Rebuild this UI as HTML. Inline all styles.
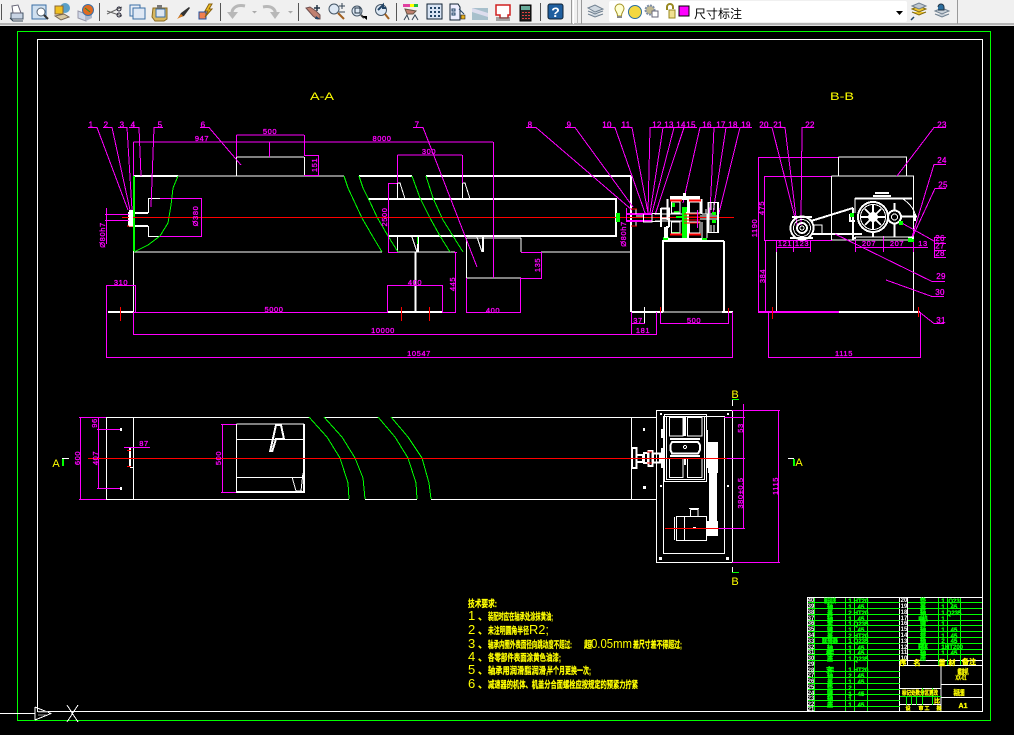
<!DOCTYPE html>
<html><head><meta charset="utf-8"><style>
html,body{margin:0;padding:0;background:#000;width:1014px;height:735px;overflow:hidden}
svg{display:block;position:absolute;left:0;top:0}
.c *{fill:none;shape-rendering:crispEdges}
.w{stroke:#fff}.m{stroke:#f0f}.g{stroke:#0f0}.r{stroke:#f00}.y{stroke:#ff0}
.t2{stroke-width:2}
.d text{fill:#f0f;stroke:#f0f;stroke-width:.3px;font:7.5px "Liberation Sans",sans-serif;letter-spacing:.6px;text-anchor:middle}
.l text{fill:#f0f;stroke:#f0f;stroke-width:.3px;font:8px "Liberation Sans",sans-serif;letter-spacing:.3px;text-anchor:middle}
.yt text{fill:#ff0;font:11px "Liberation Sans",sans-serif;text-anchor:middle}
.tr text{fill:#ff0;stroke:#ff0;stroke-width:.25px;font:bold 9.5px "Liberation Sans","Noto Sans CJK SC",sans-serif}
.tr text.n{stroke-width:0;font:13px "Liberation Sans","Noto Sans CJK SC",sans-serif}
.tb .gt{fill:#0f0;stroke:#0f0;stroke-width:.3px;font:bold 6px "Liberation Sans","Noto Sans CJK SC",sans-serif;text-anchor:middle}
.tb .wt{fill:#fff;font:bold 6px "Liberation Sans",sans-serif;text-anchor:middle}
.tb .yy{fill:#ff0;stroke:#ff0;stroke-width:.3px;font:bold 7px "Liberation Sans","Noto Sans CJK SC",sans-serif;text-anchor:middle}
</style></head><body>
<svg width="1014" height="735" viewBox="0 0 1014 735" xmlns="http://www.w3.org/2000/svg">
<rect width="1014" height="735" fill="#000"/>

<!-- frames -->
<g class="c">
<rect class="g" x="17.5" y="31.5" width="973" height="689"/>
<rect class="w" x="37.5" y="39.5" width="945" height="672"/>
<path class="w" d="M0 713.5H35"/>
<path class="w" d="M35 707V720M35 707L51 713.5L35 720M51 711.5H120"/>
<path class="w" d="M67 705L78 722M78 705L67 722"/>
<path stroke="#999" d="M38 712H48M38 715H46"/>
</g>

<!-- AA view -->
<g class="c">
<path class="w t2" d="M134 176H178M359 176H412M426 176H631M631 176V312M368 199H617M389 236H617M616 199V237"/>
<path class="w" d="M178 176H344M133.5 176V312M133 252H382M398 252H455M541 252H631"/>
<path class="w t2" d="M415.5 252V312M108 312H133M388 312H442M632 312H663M663 240V312M663 241H724M724 241V312M722 312H733"/>
<path class="w" d="M663 312H724M236.5 157H304M236.5 157V176M304.5 157V176M466.5 238H521M466.5 238V278M521 238V252M466.5 278H521M644.5 307V323"/>
<path class="w t2" d="M134 176V198M129 213H148M129 226H148M129 212V226"/>
<path class="w" d="M148.5 198V213M148.5 226V237M148 198.5H160M148 236.5H160"/>
<path class="w" d="M397.5 183V199M397 183H400L405 199M462.5 183V199M462 183H465L470 199M412 237L417 252M477 237L482 252M397.5 236V252"/>
<path class="w t2" d="M418 236V252M483 236V252"/>
<path class="g t2" d="M134 176V251"/>
<path class="g" d="M178 176L173 188L171 205L168 223L160 236L148 245L134 252M344 176L348 188L355 203L362 218L373 237L382 252M359 176L363 188L370 202L377 217L388 236L398 252M412 176L420 198L430 218L440 236L450 252M426 176L433 198L443 220L453 236L463 252M417.5 237V244"/>
<path class="r" d="M122 217.5H734M120.5 307V321M401.5 307V321M429.5 307V321M660.5 307V319M728.5 308V316M772.5 307V319M918.5 307V317M127 226H133"/>
<!-- dims AA -->
<path class="m" d="M133.5 142H493M493.5 142V278M133.5 142V176M236.5 135H304M236.5 135V157M304.5 135V156M269.5 142V157M304 155.5H318M304 175.5H318M318.5 155V176M397.5 155H462M397.5 155V183M462.5 155V183M388 183.5H397M388.5 183V252M388 252.5H398"/>
<path class="m" d="M160 198.5H201.5V236.5H160M105 214.5H129M105 220.5H129M106.5 208V244M106.5 285V358M106 285.5H135M135.5 285V312M134 312.5H388M134 334.5H657M106 357.5H733M732.5 312V358M133.5 312V335"/>
<path class="m" d="M387.5 285V312M442.5 285V312M387 285.5H442M454 252.5H457M442 312.5H456M455.5 252V312M466.5 278V312M520.5 278V312M466 312.5H521M521 252.5H542M521 278.5H542M541.5 252V278M631.5 312V335M631 323.5H645M656.5 312V335M660.5 312V323M728.5 312V323M660 323.5H729"/>
<!-- leaders AA -->
<path class="m" d="M88 127.5H97L128 210M103 127.5H112L130 210M118 127.5H127L132 210M129 127.5H139L141 176M163 127.5H154L151 207M200 127.5H209L241 165M413 127.5H423L477 267M526 127.5H536L632 210M565 127.5H575L633 207M603 127.5H615L645 213M621 127.5H632L648 213M665 127.5H650L648 213M675 127.5H663L650 213M687 127.5H674L652 213M697 127.5H684L655 215M714 127.5H700L683 203M727 127.5H714L710 213M739 127.5H726L713 213M752 127.5H740L718 217"/>
<!-- input shaft -->
<path class="m t2" d="M626 214H652M626 221H652"/>
<path class="m" d="M626.5 208V222"/>
<path class="w" d="M631 209H636V214M631 226H636V222M643.5 214V222H652V214M652 213.5H661M652 221.5H661M636 216H643"/>
<rect x="616" y="213" width="4" height="9" fill="#0f0" stroke="none" style="fill:#0f0"/>
<path class="r" d="M631 209H637M631 226H637"/>
</g>
<!-- Gearbox filled -->
<g shape-rendering="crispEdges">
<rect x="670" y="196" width="30" height="4" fill="#fff"/>
<rect x="683" y="193" width="3" height="4" fill="#fff"/>
<rect x="682" y="207" width="6" height="31" fill="#0f0"/>
<rect x="663" y="237" width="6" height="3" fill="#0f0"/>
<rect x="701" y="238" width="6" height="2" fill="#0f0"/>
<rect x="665" y="234" width="3" height="6" fill="#0f0"/>
<rect x="664" y="227" width="2" height="11" fill="#fff"/>
<rect x="668" y="238" width="34" height="2" fill="#fff"/>
<rect x="674" y="211" width="5" height="2" fill="#0f0"/>
<rect x="672" y="232" width="7" height="2" fill="#0f0"/>
<rect x="672" y="203" width="3" height="4" fill="#0f0"/>
<rect x="712" y="212" width="4" height="3" fill="#0f0"/>
<rect x="712" y="220" width="4" height="3" fill="#0f0"/>
<rect x="676" y="216" width="8" height="2" fill="#0f0"/>
<rect x="686" y="212" width="2" height="2" fill="#fff"/>
</g>
<g class="c">
<path class="w t2" d="M667.5 199V220M701.5 199V214M661 208.5H669V217M661 218.5H669V227M661 208V227M669 227H667V238"/>
<path class="w" d="M671.5 202H680V213H671.5ZM671.5 222H680V233H671.5ZM689.5 202H700V213H689.5ZM689.5 222H700V233H689.5ZM655 214H682M655 221H682M702 214H707V238M702 238V222M706 209V214H712"/>
<path class="w t2" d="M688 200V240M708.5 202V233M718 202V233"/>
<path class="w" d="M711 202V210M714 202V210M711 225V233M714 225V233M708 232.5H718M708 202.5H718M700 216H718M700 219H718"/>
<path class="r t2" d="M670 200.5H682M689 200.5H701M670 234.5H682M689 234.5H701"/>
<path class="r" d="M684 214H700M684 217H700M684 220H700M684 223H700"/>
<path class="m" d="M697.5 210V228"/>
</g>

<!-- BB view -->
<g class="c">
<path class="w" d="M838.5 157H907M838.5 157V176M906.5 157V176M831.5 176H914M831.5 176V240M913.5 176V312M831.5 240H914M776.5 240V312"/>
<path class="w t2" d="M839 312H920M853 234H812"/>
<path class="m t2" d="M758 312H839"/>
<path class="m" d="M758 157.5H838M758.5 157V312M764.5 176V240M764 176.5H831M764 240.5H832M765.5 240V312M768.5 312V358M920.5 312V358M768 357.5H921M776 247.5H811M855 247.5H928M776.5 240V252M793.5 240V252M810.5 240V252M855.5 240V252M883.5 236V252M913.5 240V252"/>
<path class="m" d="M760 127.5H772L795 218M775 127.5H785L797 225M814 127.5H802L801 225M946 127.5H934L897 176M946 164.5H934L912 237M946 188.5H935L912 238M934 241L900 222M934 237.5H946M934 243.5H946M934 250.5H946M934 257.5H946M934.5 237V258M945 281.5H932L835 234M944 296.5H932L886 280M944 323.5H934L918 311"/>
<path class="r" d="M772.5 307V319M918.5 307V317"/>
<path class="w t2" d="M811 221L853 208"/>
<circle class="w t2" cx="802" cy="228" r="11.5"/><circle class="w" cx="802" cy="228" r="8.5"/><circle class="w t2" cx="802" cy="228" r="5"/><circle class="w" cx="802" cy="228" r="2"/>
<path class="w t2" d="M790 238H813M792 217H812"/>
<path class="w" d="M814 225H822V234H814"/>
<path class="w t2" d="M855 198.5H912M853 208V240"/>
<path class="w" d="M855 198V213M855 237H912V240M903 199Q913 206 915 214"/>
<circle class="w t2" cx="873" cy="217" r="15"/><circle class="w" cx="873" cy="217" r="12.5"/><circle class="w t2" cx="873" cy="217" r="4"/>
<path class="w t2" d="M861 217H885M873 205V229M865 209L881 225M881 209L865 225"/>
<circle class="w t2" cx="894.5" cy="217" r="6.5"/><circle class="w" cx="894.5" cy="217" r="3"/>
<path class="w t2" d="M894.5 203V210M894.5 224V237M873 232V237M901 216.5H917M875 193H889M873 196H891"/>
<path class="w t2" d="M850 214V221H855M915 214V221"/>
<path class="w t2" d="M853 234H862M853 238H856M908 238H914"/>
<rect class="g t2" x="851" y="214" width="2" height="2"/><rect class="g t2" x="900" y="222" width="2" height="2"/><rect class="g t2" x="909" y="239" width="2" height="2"/><rect class="g t2" x="912" y="240" width="1" height="1"/>
</g>

<!-- Plan view -->
<g class="c">
<path class="w" d="M106 417.5H309M324 417.5H378M391 417.5H632M106 499.5H349M365 499.5H417M431 499.5H632M106.5 417V500M133.5 417V500M631.5 417V500M130 447.5H133M130 467.5H133M236.5 424H304M236.5 424V492M236.5 439.5H304M236.5 477.5H304"/>
<path class="w t2" d="M130 448V467M304 424V493M236 492H305"/>
<path class="w t2" d="M270 452L276 425H281L284 439M272 452L276 439H284"/>
<path class="w" d="M292 477L296 491H302M303 473L301 491"/>
<path class="g" d="M309 417L327 437L340 458L348 483L349 499M324 417L342 437L355 458L363 478L365 499M378 417L395 437L408 458L416 483L417 499M391 417L408 437L422 458L429 483L431 499"/>
<path class="m" d="M80.5 417V499M79 417.5H106M79 499.5H106M98.5 418V488M97 429.5H121M97 488.5H121M124 447.5H150M222.5 424V492M221 424.5H236M221 492.5H236"/>
<path class="r" d="M127 450.5H131M127 466.5H131"/>
<path class="w" d="M62 458.5H69M788 458.5H794"/>
<path class="g t2" d="M63 459V466M794 459V466"/>
<!-- plate -->
<path class="w" d="M631 417.5H656M631 499.5H656M656.5 410.5H732.5V562.5H656.5ZM663.5 416.5H724.5V553.5H663.5Z"/>
<path class="w" d="M732.5 400V406M732.5 567V572"/>
<path class="g" d="M732 399.5H739M732 572.5H739"/>
<path class="m" d="M732 410.5H780M732 562.5H780M778.5 410V563M724 417.5H745M743.5 404V528M726 458.5H745M719 528.5H745"/>
<path class="w t2" d="M632 448V468H636.500V448ZM636 455H643V462H636M644 453H648V463H644ZM648.500 451H652.500V466H648.500ZM653 453.500H660V462.500H653Z"/>
<path class="r" d="M647 452H652M647 463H652"/>
<path class="w" d="M664.500 414.500H706.500V481.500H664.500ZM666.500 416.500H704.500V479.500H666.500Z"/>
<path class="w" d="M669.500 417.500H683V436H669.500ZM687.500 417.500H702V436H687.500ZM669.500 458.500H683V477.500H669.500ZM687.500 458.500H702V477.500H687.500Z"/>
<path class="w t2" d="M672 442H698L700 445V450L698 453.500H672L670.500 450V445Z"/>
<path class="w t2" d="M662 429V438M662 448V468M707 430V468M684 417V436M685 417V436M685 458V465M670 439H700M670 456H700"/>
<circle class="w" cx="685" cy="447" r="1.500"/>
<path class="w" d="M676.500 516.500H706.500V540.500H676.500ZM674.500 517V540M684.500 516V541M690.500 509.500H698V517M690.500 509.500V517M689 508.500H699"/>
</g>
<g shape-rendering="crispEdges" fill="#fff">
<rect x="708" y="442" width="10" height="31"/><rect x="709" y="473" width="8" height="49"/><rect x="706" y="521" width="12" height="15"/>
<rect x="660" y="413" width="2" height="2"/><rect x="727" y="413" width="2" height="2"/><rect x="660" y="485" width="2" height="2"/><rect x="727" y="485" width="2" height="2"/><rect x="659" y="557" width="3" height="3"/><rect x="726" y="557" width="3" height="3"/>
<rect x="643" y="428" width="2" height="3"/><rect x="643" y="486" width="3" height="3"/><rect x="693" y="527" width="3" height="2"/>
<rect x="120" y="428" width="2" height="3"/><rect x="120" y="487" width="2" height="3"/>
<rect x="129" y="210" width="4" height="16"/>
</g>
<g class="c"><path class="r" d="M88 458.500H727M665 528.500H719"/><path class="r" d="M708 458.500H718" style="stroke:#f00"/></g>

<!-- Text: labels -->
<g class="l">
<text x="91" y="127.500">1</text><text x="106" y="127.500">2</text><text x="122" y="127.500">3</text><text x="133" y="127.500">4</text><text x="160" y="127.500">5</text><text x="203" y="127.500">6</text><text x="417" y="127.500">7</text><text x="530" y="127.500">8</text><text x="569" y="127.500">9</text><text x="607" y="127.500">10</text><text x="626" y="127.500">11</text><text x="657" y="127.500">12</text><text x="669" y="127.500">13</text><text x="681" y="127.500">14</text><text x="691" y="127.500">15</text><text x="707" y="127.500">16</text><text x="721" y="127.500">17</text><text x="733" y="127.500">18</text><text x="746" y="127.500">19</text>
<text x="764" y="127.500">20</text><text x="778" y="127.500">21</text><text x="810" y="127.500">22</text><text x="942" y="127.500">23</text><text x="942" y="163">24</text><text x="943" y="187.500">25</text><text x="940" y="241">26</text><text x="940" y="248.500">27</text><text x="940" y="256">28</text><text x="941" y="279">29</text><text x="940" y="295">30</text><text x="941" y="323">31</text>
</g>
<g class="d">
<text x="270" y="134">500</text><text x="202" y="141">947</text><text x="382" y="141">8000</text><text x="429" y="154">300</text>
<text x="121" y="285">310</text><text x="415" y="285">400</text><text x="493" y="313">400</text><text x="274" y="312">5000</text><text x="383" y="333">10000</text><text x="419" y="356">10547</text><text x="638" y="323">37</text><text x="643" y="333">181</text><text x="694" y="323">500</text>
<text transform="translate(317,165) rotate(-90)">151</text><text transform="translate(198,216) rotate(-90)">Ø380</text><text transform="translate(105,235) rotate(-90)">Ø80h7</text><text transform="translate(387,217) rotate(-90)">2500</text><text transform="translate(455,284) rotate(-90)">445</text><text transform="translate(540,265) rotate(-90)">135</text><text transform="translate(626,234) rotate(-90)">Ø80h7</text>
<text transform="translate(757,228) rotate(-90)">1190</text><text transform="translate(764,208) rotate(-90)">475</text><text transform="translate(765,276) rotate(-90)">384</text>
<text x="785" y="246">121</text><text x="802" y="246">123</text><text x="869" y="246">207</text><text x="897" y="246">207</text><text x="923" y="246">13</text><text x="844" y="356">1115</text>
<text transform="translate(80,458) rotate(-90)">600</text><text transform="translate(97,423) rotate(-90)">96</text><text transform="translate(98,458) rotate(-90)">407</text><text x="144" y="446">87</text><text transform="translate(221,458) rotate(-90)">500</text>
<text transform="translate(743,428) rotate(-90)">53</text><text transform="translate(743,493) rotate(-90)">380±0.5</text><text transform="translate(778,486) rotate(-90)">1115</text>
</g>
<g class="yt">
<text x="322" y="100" textLength="24" lengthAdjust="spacingAndGlyphs">A-A</text><text x="842" y="100" textLength="24" lengthAdjust="spacingAndGlyphs">B-B</text>
<text x="56" y="467">A</text><text x="799" y="466">A</text><text x="735" y="398">B</text><text x="735" y="585">B</text>
</g>

<!-- Tech requirements -->
<g class="tr">
<text x="468" y="607" textLength="29" lengthAdjust="spacingAndGlyphs">技术要求:</text>
<text class="n" x="468" y="620">1</text><text x="478" y="620">、</text><text x="488" y="620" textLength="65" lengthAdjust="spacingAndGlyphs">装配时应在轴承处涂抹黄油;</text>
<text class="n" x="468" y="634">2</text><text x="478" y="634">、</text><text x="488" y="634" textLength="41" lengthAdjust="spacingAndGlyphs">未注明圆角半径</text><text class="n" x="529" y="634" textLength="20" lengthAdjust="spacingAndGlyphs">R2;</text>
<text class="n" x="468" y="648">3</text><text x="478" y="648">、</text><text x="488" y="648" textLength="84" lengthAdjust="spacingAndGlyphs">轴承内圈外表面径向跳动度不超过:</text><text x="584" y="648" textLength="8" lengthAdjust="spacingAndGlyphs">超</text><text class="n" x="591" y="648" textLength="41" lengthAdjust="spacingAndGlyphs">0.05mm</text><text x="633" y="648" textLength="49" lengthAdjust="spacingAndGlyphs">差尺寸差不得超过;</text>
<text class="n" x="468" y="661">4</text><text x="478" y="661">、</text><text x="488" y="661" textLength="73" lengthAdjust="spacingAndGlyphs">各零部件表面涂黄色油漆;</text>
<text class="n" x="468" y="674">5</text><text x="478" y="674">、</text><text x="488" y="674" textLength="60" lengthAdjust="spacingAndGlyphs">轴承用润滑脂润滑,</text><text x="547" y="674" textLength="44" lengthAdjust="spacingAndGlyphs">半个月更换一次;</text>
<text class="n" x="468" y="688">6</text><text x="478" y="688">、</text><text x="488" y="688" textLength="150" lengthAdjust="spacingAndGlyphs">减速器的机体、机盖分合面螺栓应按规定的预紧力拧紧</text>
</g>

<!-- Title block -->
<g class="c">
<path class="w" d="M807.500 597.500H982M807.500 597V711M899.500 597V711M907.500 597V666M899 660.500H982M899 665.500H982M941 666V711M941 684.500H982M941 697.500H982M900 688.500H941M900 704.500H941"/>
<path class="g" d="M814.500 598V711M845.500 598V711M854.500 598V711M867.500 598V711M938.500 598V665M947.500 598V665M960.500 598V665M922.500 688V705M932.500 688V705M906.500 697V705M911.500 697V705M916.500 697V705M900 696.500H941"/>
<path class="g" d="M808 602.500H900M808 608.500H900M808 614.500H900M808 620.500H900M808 625.500H900M808 631.500H900M808 637.500H900M808 643.500H900M808 649.500H900M808 654.500H900M808 660.500H900M808 671.500H900M808 677.500H900M808 683.500H900M808 689.500H900M808 694.500H900M808 700.500H900M808 706.500H900M908 602.500H982M908 608.500H982M908 614.500H982M908 620.500H982M908 625.500H982M908 631.500H982M908 637.500H982M908 643.500H982M908 649.500H982M908 654.500H982"/>
</g>
<g class="tb">
<text class="wt" x="811" y="602">40</text><text class="wt" x="811" y="608">39</text><text class="wt" x="811" y="614">38</text><text class="wt" x="811" y="620">37</text><text class="wt" x="811" y="625">36</text><text class="wt" x="811" y="631">35</text><text class="wt" x="811" y="637">34</text><text class="wt" x="811" y="643">33</text><text class="wt" x="811" y="649">32</text><text class="wt" x="811" y="654">31</text><text class="wt" x="811" y="660">30</text><text class="wt" x="811" y="666">29</text><text class="wt" x="811" y="672">28</text><text class="wt" x="811" y="677">27</text><text class="wt" x="811" y="683">26</text><text class="wt" x="811" y="689">25</text><text class="wt" x="811" y="695">24</text><text class="wt" x="811" y="700">23</text><text class="wt" x="811" y="706">22</text><text class="wt" x="811" y="711">21</text>
<text class="wt" x="904" y="602">20</text><text class="wt" x="904" y="608">19</text><text class="wt" x="904" y="614">18</text><text class="wt" x="904" y="620">17</text><text class="wt" x="904" y="625">16</text><text class="wt" x="904" y="631">15</text><text class="wt" x="904" y="637">14</text><text class="wt" x="904" y="643">13</text><text class="wt" x="904" y="649">12</text><text class="wt" x="904" y="654">11</text><text class="wt" x="904" y="660">10</text>
<text class="gt" x="830" y="603" textLength="12" lengthAdjust="spacingAndGlyphs">输送机壳</text><text class="gt" x="830" y="609">轴</text><text class="gt" x="830" y="615">盖</text><text class="gt" x="830" y="621">轴</text><text class="gt" x="830" y="626">套</text><text class="gt" x="830" y="632">键</text><text class="gt" x="830" y="638">盖</text><text class="gt" x="830" y="643" textLength="16" lengthAdjust="spacingAndGlyphs">联轴器</text><text class="gt" x="830" y="650">轴</text><text class="gt" x="830" y="655" textLength="8">机架</text><text class="gt" x="830" y="661">座</text><text class="gt" x="830" y="672" textLength="8">支架</text><text class="gt" x="830" y="678">轴</text><text class="gt" x="830" y="684">盖</text><text class="gt" x="830" y="690">垫</text><text class="gt" x="830" y="696">键</text><text class="gt" x="830" y="701">轴</text><text class="gt" x="830" y="707">座</text>
<text class="gt" x="850" y="603">1</text><text class="gt" x="850" y="609">1</text><text class="gt" x="850" y="615">2</text><text class="gt" x="850" y="621">1</text><text class="gt" x="850" y="626">1</text><text class="gt" x="850" y="632">1</text><text class="gt" x="850" y="638">2</text><text class="gt" x="850" y="643">1</text><text class="gt" x="850" y="650">1</text><text class="gt" x="850" y="655">1</text><text class="gt" x="850" y="661">1</text><text class="gt" x="850" y="672">1</text><text class="gt" x="850" y="678">2</text><text class="gt" x="850" y="684">1</text><text class="gt" x="850" y="690">2</text><text class="gt" x="850" y="696">1</text><text class="gt" x="850" y="701">1</text><text class="gt" x="850" y="707">1</text>
<text class="gt" x="861" y="603">HT20</text><text class="gt" x="861" y="609">45</text><text class="gt" x="861" y="615">HT20</text><text class="gt" x="861" y="621">45</text><text class="gt" x="861" y="626">Q235</text><text class="gt" x="861" y="632">45</text><text class="gt" x="861" y="638">HT20</text><text class="gt" x="861" y="643">Q235</text><text class="gt" x="861" y="650">45</text><text class="gt" x="861" y="655">45</text><text class="gt" x="861" y="661">Q235</text><text class="gt" x="861" y="672">HT20</text><text class="gt" x="861" y="678">45</text><text class="gt" x="861" y="684">45</text><text class="gt" x="861" y="696">45</text><text class="gt" x="861" y="707">45</text>
<text class="gt" x="923" y="603">垫</text><text class="gt" x="923" y="609">盖</text><text class="gt" x="923" y="615">轴</text><text class="gt" x="923" y="621" textLength="10">电机</text><text class="gt" x="923" y="626">键</text><text class="gt" x="923" y="632">轴</text><text class="gt" x="923" y="638">带</text><text class="gt" x="923" y="643">轴</text><text class="gt" x="923" y="649" textLength="10">箱体</text><text class="gt" x="923" y="655">轴</text><text class="gt" x="923" y="660">座</text>
<text class="gt" x="943" y="603">1</text><text class="gt" x="943" y="609">1</text><text class="gt" x="943" y="615">1</text><text class="gt" x="943" y="621">1</text><text class="gt" x="943" y="626">1</text><text class="gt" x="943" y="632">1</text><text class="gt" x="943" y="638">1</text><text class="gt" x="943" y="643">2</text><text class="gt" x="943" y="649">1</text><text class="gt" x="943" y="655">1</text>
<text class="gt" x="954" y="603">Q23</text><text class="gt" x="954" y="609">45</text><text class="gt" x="954" y="615">Q235</text><text class="gt" x="954" y="632">45</text><text class="gt" x="954" y="638">45</text><text class="gt" x="954" y="643">45</text><text class="gt" x="954" y="649">HT200</text><text class="gt" x="954" y="655">45</text>
<text class="yy" x="903" y="665">序</text><text class="yy" x="917" y="665">名</text><text class="yy" x="942" y="665">量</text><text class="yy" x="952" y="665">材</text><text class="yy" x="969" y="664">备注</text>
<text class="yy" x="963" y="674" textLength="11" lengthAdjust="spacingAndGlyphs">螺旋机</text><text class="yy" x="961" y="680" textLength="11" lengthAdjust="spacingAndGlyphs">XX-01</text><text class="yy" x="959" y="695" textLength="11" lengthAdjust="spacingAndGlyphs">装配图</text><text class="yy" x="963" y="708">A1</text>
<text class="yy" x="920" y="695" textLength="36" lengthAdjust="spacingAndGlyphs" style="font-size:6px">标记处数分区更改</text><text class="yy" x="937" y="703" style="font-size:6px">比</text>
<text class="yy" x="908" y="710" style="font-size:5px">设</text><text class="yy" x="921" y="710" style="font-size:5px">审</text><text class="yy" x="927" y="710" style="font-size:5px">工</text><text class="yy" x="939" y="710" style="font-size:5px">批</text>
</g>

<!-- Toolbar -->
<rect x="0" y="0" width="1014" height="23" fill="#f0f0f0"/>
<rect x="0" y="23" width="1014" height="2" fill="#b4b4b4"/>
<rect x="0" y="25" width="1014" height="1" fill="#e0e0e0"/>
<g shape-rendering="crispEdges" fill="#555">
<rect x="1" y="4" width="1" height="16"/><rect x="99" y="3" width="1" height="18"/><rect x="220" y="3" width="1" height="18"/><rect x="298" y="3" width="1" height="18"/><rect x="396" y="3" width="1" height="18"/><rect x="540" y="3" width="1" height="18"/>
</g>
<rect x="571" y="0" width="1" height="24" fill="#999"/><rect x="573" y="0" width="1" height="24" fill="#fff"/><rect x="577" y="0" width="1" height="24" fill="#bbb"/><rect x="581" y="0" width="1" height="24" fill="#999"/>
<rect x="957" y="0" width="1" height="24" fill="#999"/>
<rect x="609" y="1" width="298" height="21" rx="2" fill="#fff"/>
<text x="694" y="18" font-family="'Liberation Sans','Noto Sans CJK SC',sans-serif" font-size="12" fill="#000">尺寸标注</text>
<rect x="679" y="6" width="10" height="10" fill="#f0f" stroke="#000" stroke-width="1" shape-rendering="crispEdges"/>
<path d="M896 11h7l-3.500 4z" fill="#000"/>

<!-- icons -->
<g fill="none">
<!-- print -->
<path d="M11 13h12v6H11z" fill="#c8d4e4" stroke="#456"/><path d="M12 6l6-1 3 8h-8z" fill="#fff" stroke="#667"/><path d="M10 18l3 3h10" stroke="#345"/>
<!-- preview -->
<path d="M32 5h14v14H32z" fill="#cfe0f0" stroke="#3a6ea5"/><circle cx="41" cy="12" r="4" fill="#fff" stroke="#567"/><path d="M44 15l4 4" stroke="#333" stroke-width="2"/>
<!-- publish -->
<circle cx="65" cy="8" r="5" fill="#5aa0c8"/><rect x="55" y="6" width="8" height="8" fill="#f0c020" stroke="#863"/><path d="M55 16l6 4 8-3-5-3z" fill="#d8c8a0" stroke="#765"/>
<!-- web -->
<path d="M78 11l8 3v7l-8-3z" fill="#d0d8e8" stroke="#99a"/><path d="M86 14l6-3v7l-6 3z" fill="#aeb8cc"/><circle cx="88" cy="10" r="5.500" fill="#e06a20" stroke="#3a70a8"/><path d="M85 8l5 4" stroke="#2c8a30"/>
<!-- cut -->
<path d="M107 11l15 5M107 14l15-7" stroke="#666"/><circle cx="119" cy="9" r="2" stroke="#223"/><circle cx="119" cy="15" r="2" stroke="#223"/>
<!-- copy -->
<rect x="130" y="5" width="10" height="11" fill="#e8eef6" stroke="#3a6ea5"/><rect x="133" y="8" width="12" height="11" fill="#dfe8f4" stroke="#3a6ea5"/>
<!-- paste -->
<path d="M153 8h14v11l-3 2h-9l-3-4z" fill="#d8b860" stroke="#8a6a20"/><rect x="156" y="9" width="9" height="8" fill="#dce6f2" stroke="#3a6ea5"/><rect x="157" y="5" width="5" height="3" fill="#777"/>
<!-- brush -->
<path d="M178 18l3-5 8-6 1 1-6 8z" fill="#333"/><path d="M177 19l4-5 2 2z" fill="#e08020"/>
<!-- match -->
<rect x="199" y="12" width="7" height="7" fill="#f08050" stroke="#2050a0"/><path d="M209 4l-4 7h3l-3 6 7-8h-3l3-5z" fill="#f0c020" stroke="#886010"/>
<!-- undo/redo -->
<path d="M245 6C237 4 232 8 232 13" stroke="#b8b8b8" stroke-width="3"/><path d="M227 12h11l-5.500 7z" fill="#b8b8b8"/><path d="M252 11h5l-2.500 2.500z" fill="#aaa"/>
<path d="M263 7C272 5 276 10 275 14" stroke="#b8b8b8" stroke-width="3"/><path d="M270 12h10l-5 7z" fill="#b8b8b8"/><path d="M288 11h5l-2.500 2.500z" fill="#aaa"/>
<!-- pan -->
<path d="M306 8l7 8 4 3h3v-4l-4-4-3-2-3-2z" fill="#c08070" stroke="#705050"/><path d="M317 5v6M314 8h6" stroke="#234" stroke-width="1.500"/><path d="M316 16l4 3h-5z" fill="#246"/>
<!-- zoom -->
<circle cx="334" cy="9" r="5" fill="#dde8f4" stroke="#456"/><path d="M338 13l6 6" stroke="#a06020" stroke-width="2"/><path d="M342 3v6M339 6h6M339 12h6" stroke="#345"/>
<circle cx="357" cy="11" r="5" fill="#dde8f4" stroke="#456"/><rect x="355" y="8" width="5" height="5" stroke="#234"/><path d="M361 15l3 3" stroke="#444" stroke-width="2"/><path d="M362 16h5v4z" fill="#000"/>
<circle cx="381" cy="10" r="5.500" fill="#dde8f4" stroke="#456"/><path d="M378 10l5-5v3h3" stroke="#246" stroke-width="2"/><path d="M385 14l4 5" stroke="#a06020" stroke-width="2"/>
<!-- tools -->
<rect x="403" y="4" width="15" height="3" fill="#e040a0"/><rect x="410" y="4" width="4" height="3" fill="#ff0"/><rect x="414" y="4" width="4" height="3" fill="#20c040"/><path d="M405 9l11 2-3 3h-6z" fill="#c08070" stroke="#654"/><path d="M404 20l3-5 2 5M412 20l3-5 3 5" stroke="#345"/>
<rect x="427" y="4" width="15" height="15" fill="#d8e4f4" stroke="#123"/><path d="M430 7h2v2h-2zM434 7h2v2h-2zM438 7h2v2h-2zM430 11h2v2h-2zM434 11h2v2h-2zM438 11h2v2h-2zM430 15h2v2h-2zM434 15h2v2h-2zM438 15h2v2h-2z" fill="#246"/>
<path d="M450 4h8l2 3v13h-10z" fill="#eef" stroke="#123"/><path d="M452 9h3v2h-3zM452 13h3v2h-3z" stroke="#246"/><path d="M459 9l5 5" stroke="#246"/><rect x="461" y="15" width="4" height="4" fill="#e8b020" stroke="#000" stroke-width=".5"/>
<path d="M472 8h16v12h-16z" fill="#a8c0cc"/><path d="M472 8l16 5v4l-16-5z" fill="#dde"/>
<path d="M496 5h14v10h-2v3h-8v-3h-4z" fill="#fff" stroke="#d02020" stroke-width="1.500"/><path d="M496 18h14M496 20h14" stroke="#555"/>
<rect x="520" y="5" width="11" height="16" fill="#222" stroke="#000"/><rect x="521" y="6" width="9" height="4" fill="#6a9"/><path d="M522 12h2v1h-2zM525 12h2v1h-2zM528 12h2v1h-2zM522 15h2v1h-2zM525 15h2v1h-2zM528 15h2v1h-2zM522 18h2v1h-2zM525 18h2v1h-2zM528 18h2v1h-2z" fill="#e04040"/>
<rect x="548" y="4" width="15" height="15" rx="2" fill="#1f5f9f" stroke="#123"/>
<text x="555.500" y="17" font-family="'Liberation Sans',sans-serif" font-weight="bold" font-size="14" fill="#fff" text-anchor="middle">?</text>
<!-- layers -->
<path d="M588 8l7-3 8 4-8 3zM588 11l7 3 8-3M588 14l7 3 8-3" fill="#cfd8e0" stroke="#708090"/>
<path d="M619 4a4.500 4.500 0 0 1 4.500 4.500c0 3-2.500 3-2.500 7.500h-4c0-4.500-2.500-4.500-2.500-7.500A4.500 4.500 0 0 1 619 4z" transform="translate(0.500 0)" fill="#ffffd0" stroke="#a09020"/><path d="M617 16h5v2h-5z" fill="#888"/>
<circle cx="635" cy="12" r="6.500" fill="#f4d840" stroke="#2c6e9e"/>
<circle cx="650" cy="10" r="4.500" fill="#c0b890" stroke="#8090a8" stroke-width="2" stroke-dasharray="2 1"/><rect x="652" y="11" width="6" height="6" fill="#fff" stroke="#667"/>
<path d="M667 10V7a3 3 0 0 1 6 0v2" stroke="#988820" stroke-width="2"/><rect x="669" y="10" width="6" height="8" fill="#f0e090" stroke="#988820"/>
<path d="M912 9l7-3 7 3-7 3zM912 12l7 3 7-3" fill="#f0c830" stroke="#806810"/><path d="M912 6l7-3 7 3-7 3z" fill="#c0c8d0" stroke="#708090"/><path d="M911 20l3-3" stroke="#246" stroke-width="1.500"/>
<path d="M935 11l7-3 7 3-7 3zM935 14l7 3 7-3" fill="#c8d0d8" stroke="#708090"/><path d="M938 7a3 3 0 0 1 6 0v3h-6" fill="#2c6e9e" stroke="#234"/>
</g>
</svg>
</body></html>
